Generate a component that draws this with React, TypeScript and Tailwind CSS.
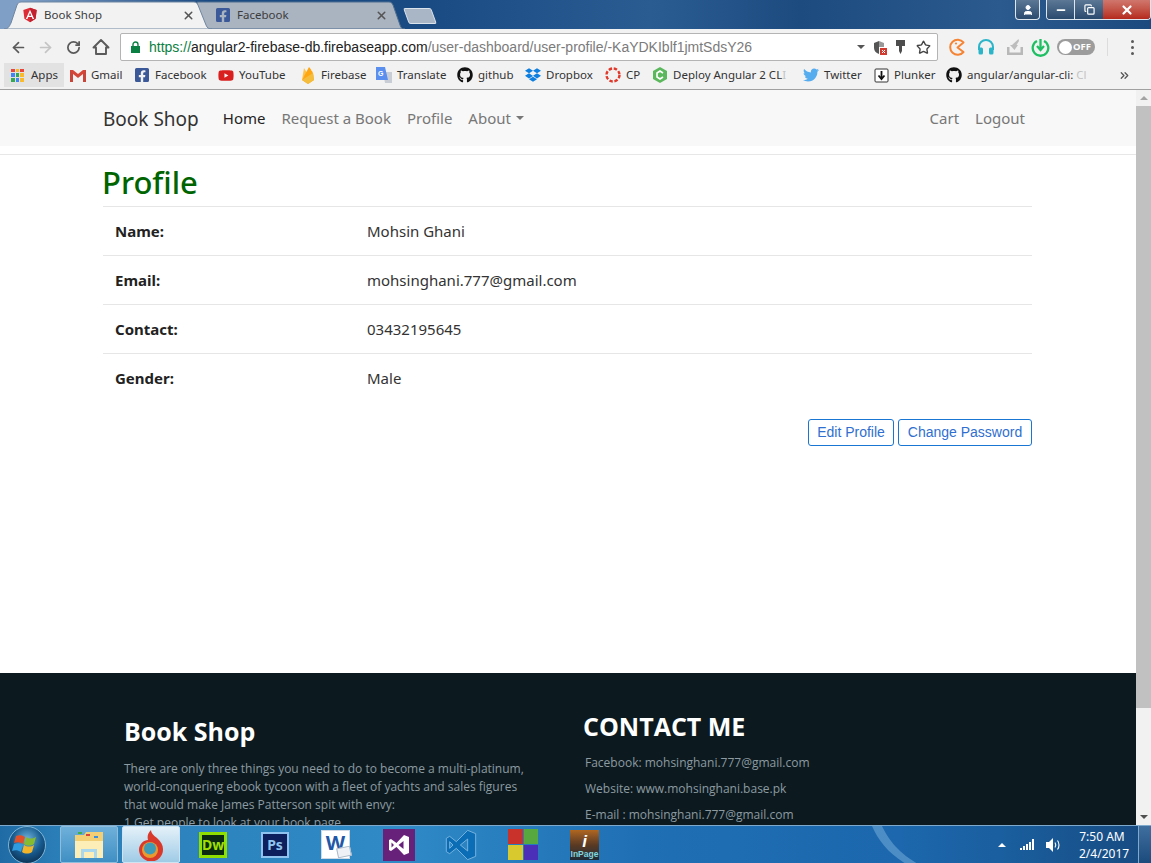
import React from 'react';
import { ArrowLeft, ArrowRight, RotateCw, Star, ChevronsRight, Minus, X, Copy, User } from 'lucide-react';
import { FaGithub, FaDropbox, FaTwitter, FaYoutube, FaFacebookSquare } from 'react-icons/fa';

const ui = "font-['Noto_Sans','Open_Sans',sans-serif]";

const Angular = ({ size = 16 }: { size?: number }) => (
  <svg width={size} height={size} viewBox="0 0 24 24">
    <path d="M12 1 2 4.6l1.6 13.2L12 23l8.4-5.2L22 4.6z" fill="#dd2c36" />
    <path d="M12 1v22l8.4-5.2L22 4.6z" fill="#c3202f" />
    <path d="M12 4 5.8 18h2.3l1.25-3.1h5.3L15.9 18h2.3zm1.8 9h-3.6L12 8.7z" fill="#fff" />
  </svg>
);

const Firebase = () => (
  <svg width="14" height="18" viewBox="0 0 14 18">
    <path d="M1 14 3 2l3 5z" fill="#ffc24a" />
    <path d="M1 14 8 1c1 1 4 6 4 6l1 7-6 4z" fill="#ffa712" />
    <path d="M1 14l11-7 1 7-6 4z" fill="#f4bd3e" />
  </svg>
);

const Tab = ({ title, active, icon }: { title: string; active?: boolean; icon: React.ReactNode }) => (
  <div className={active ? 'relative z-10 flex h-[28px] w-[212px] items-center pl-[22px] pr-[17px]' : 'relative -ml-[15px] flex h-[28px] w-[208px] items-center pl-[18px] pr-[17px]'}>
    {active ? (
      <svg className="absolute left-0 top-0" width="212" height="28" viewBox="0 0 212 28">
        <path d="M4 28C8 28 9 26 11 22L17 4C18 2 19 1 21 1H194C196 1 197 2 198 4L206 24C207 27 209 28 212 28Z" fill="#f2f2f2" stroke="#6f86a0" />
      </svg>
    ) : (
      <svg className="absolute left-0 top-0" width="208" height="28" viewBox="0 0 208 28">
        <path d="M0 28V1H192C194 1 195 2 196 4L203 24C204 27 205 28 208 28Z" fill="#aab4c1" stroke="#4f6f90" />
      </svg>
    )}
    <span className="relative mr-[6px] flex h-4 w-4 shrink-0 items-center justify-center">{icon}</span>
    <span className={`relative flex-1 truncate text-[11.5px] text-[#3c3c3c] ${ui}`}>{title}</span>
    <X className="relative h-[13px] w-[13px] text-[#555]" strokeWidth={2.8} />
  </div>
);

const bookmarks: { label: string; fadeTail?: string; w: string; icon: React.ReactNode }[] = [
  { label: 'Gmail', w: 'w-[64px]', icon: (
    <svg width="16" height="13" viewBox="0 0 16 13"><path d="M0 1h3l5 4 5-4h3v12h-3V5L8 9 3 5v8H0z" fill="#d44638" /><path d="M3 5v8H0V1zM13 5v8h3V1z" fill="#c9453a" /></svg>
  ) },
  { label: 'Facebook', w: 'w-[84px]', icon: <FaFacebookSquare size={16} color="#3b5998" /> },
  { label: 'YouTube', w: 'w-[82px]', icon: <FaYoutube size={17} color="#d9201f" /> },
  { label: 'Firebase', w: 'w-[76px]', icon: <Firebase /> },
  { label: 'Translate', w: 'w-[81px]', icon: (
    <svg width="16" height="16" viewBox="0 0 16 16"><path d="M7 5h9v11H9z" fill="#c9ced6" /><path d="M0 0h9l3 13H0z" fill="#5a8ff0" /><text x="2" y="9" fontSize="7" fill="#fff" fontFamily="Liberation Sans" fontWeight="700">G</text></svg>
  ) },
  { label: 'github', w: 'w-[68px]', icon: <FaGithub size={16} color="#111" /> },
  { label: 'Dropbox', w: 'w-[80px]', icon: <FaDropbox size={16} color="#0d7fe0" /> },
  { label: 'CP', w: 'w-[47px]', icon: (
    <svg width="16" height="16" viewBox="0 0 16 16"><circle cx="8" cy="8" r="6.5" fill="none" stroke="#e0392b" strokeWidth="2.4" strokeDasharray="3.4 1.7" /></svg>
  ) },
  { label: 'Deploy Angular 2 CL', fadeTail: 'I', w: 'w-[151px]', icon: (
    <svg width="16" height="16" viewBox="0 0 16 16"><path d="M8 0l7 4v8l-7 4-7-4V4z" fill="#5cb85c" /><path d="M11 6 8 4 5 6v4l3 2 3-2" fill="none" stroke="#fff" strokeWidth="1.6" /></svg>
  ) },
  { label: 'Twitter', w: 'w-[70px]', icon: <FaTwitter size={16} color="#55acee" /> },
  { label: 'Plunker', w: 'w-[73px]', icon: (
    <svg width="15" height="15" viewBox="0 0 15 15"><rect x="1" y="1" width="13" height="13" rx="1" fill="#fff" stroke="#333" /><path d="M7.5 3v7M4.5 7.5l3 3.5 3-3.5" fill="none" stroke="#111" strokeWidth="1.8" /></svg>
  ) },
];

const rows = [
  ['Name:', 'Mohsin Ghani'],
  ['Email:', 'mohsinghani.777@gmail.com'],
  ['Contact:', '03432195645'],
  ['Gender:', 'Male'],
];

const ChromeBar = () => (
  <div className={`shrink-0 ${ui}`}>
    {/* Title strip with tabs */}
    <div className="relative flex h-[29px] bg-[linear-gradient(90deg,#7f9fc6_0,#7f9fc6_20px,#1a4a82_210px,#1b4b83_430px,#2a5c92_650px,#1d4b80_800px,#2b5a8e_1000px,#1d4a7e_1151px)] pt-[1px]">
      <Tab title="Book Shop" active icon={<Angular size={16} />} />
      <Tab title="Facebook" icon={<FaFacebookSquare size={16} color="#3b5998" />} />
      <div className="ml-[1px] mt-[7px] h-[16px] w-[28px] skew-x-[20deg] rounded-[2px] border border-[#dbe3ec] bg-[#a9b6c6]" />
      <div className="absolute right-0 top-0 flex h-[20px]">
        <div className="mr-[6px] flex w-[25px] items-center justify-center rounded-b-[4px] border border-t-0 border-[#dfe6ee] bg-gradient-to-b from-[#5c7896] to-[#2a4a6e]">
          <User className="h-[12px] w-[12px] fill-white text-white" />
        </div>
        <div className="flex overflow-hidden rounded-b-[4px] border border-t-0 border-[#dfe6ee]">
          <div className="flex w-[28px] items-center justify-center border-r border-[#dfe6ee] bg-gradient-to-b from-[#5c7896] to-[#2a4a6e]"><Minus className="h-[12px] w-[12px] text-white" strokeWidth={3.5} /></div>
          <div className="flex w-[28px] items-center justify-center bg-gradient-to-b from-[#5c7896] to-[#2a4a6e]"><Copy className="h-[11px] w-[11px] text-white" strokeWidth={2.6} /></div>
          <div className="flex w-[47px] items-center justify-center bg-gradient-to-b from-[#d0766d] to-[#b5281c]"><X className="h-[14px] w-[14px] text-white" strokeWidth={3.8} /></div>
        </div>
      </div>
    </div>
    {/* Toolbar */}
    <div className="flex h-[33px] items-center bg-[#f2f2f2] pl-[10px] pt-[3px]">
      <ArrowLeft className="h-[17px] w-[17px] text-[#5a5a5a]" strokeWidth={2.4} />
      <ArrowRight className="ml-[10px] h-[17px] w-[17px] text-[#c4c4c4]" strokeWidth={2.4} />
      <RotateCw className="ml-[12px] h-[15px] w-[15px] text-[#5a5a5a]" strokeWidth={2.8} />
      <svg width="18" height="18" viewBox="0 0 18 18" className="ml-[11px]"><path d="M1.5 9.5 9 2l7.5 7.5H14V16H4V9.5z" fill="none" stroke="#5a5a5a" strokeWidth="1.9" strokeLinejoin="round" /></svg>
      <div className="ml-[10px] flex h-[28px] w-[818px] items-center rounded-[2px] border border-[#b4b4b4] bg-white pl-[10px] pr-[6px]">
        <svg width="9" height="12" viewBox="0 0 9 12"><path d="M2 5V3.5a2.5 2.5 0 0 1 5 0V5" fill="none" stroke="#0b8043" strokeWidth="1.4" /><rect y="5" width="9" height="7" fill="#0b8043" /></svg>
        <span className="ml-[9px] flex-1 truncate font-['Liberation_Sans',sans-serif] text-[14px] text-[#7b7b7b]">
          <span className="text-[#0b8043]">https://</span>
          <span className="text-[#222]">angular2-firebase-db.firebaseapp.com</span>
          /user-dashboard/user-profile/-KaYDKIblf1jmtSdsY26
        </span>
        <span className="mr-[8px] h-0 w-0 border-x-[4px] border-t-[4px] border-x-transparent border-t-[#555]" />
        <svg width="14" height="15" viewBox="0 0 14 15" className="mr-[8px]"><path d="M6 1 1 3v5c0 3 2 5 5 6z" fill="#555" /><path d="M6 1l5 2v4H6z" fill="#999" /><rect x="7" y="8" width="7" height="7" fill="#d23a30" /><path d="M9 10l3 3M12 10l-3 3" stroke="#fff" /></svg>
        <svg width="11" height="16" viewBox="0 0 11 16" className="mr-[10px]"><path d="M1 1h9v6H7v5l-1.5 3L4 12V7H1z" fill="#4d4d4d" /></svg>
        <Star className="h-[15px] w-[15px] text-[#444]" strokeWidth={2.2} />
      </div>
      <svg width="18" height="18" viewBox="0 0 18 18" className="ml-[10px]"><path d="M15.5 4.5a7.5 7.5 0 1 0 0 9.5L9.5 9.5z" fill="none" stroke="#f58434" strokeWidth="2" strokeLinejoin="round" /><circle cx="8" cy="5.5" r="1.1" fill="#f58434" /></svg>
      <svg width="18" height="18" viewBox="0 0 18 18" className="ml-[11px]"><path d="M2 12V9a7 7 0 0 1 14 0v3" fill="none" stroke="#2cb5c9" strokeWidth="2" /><rect x="1.5" y="9.5" width="4.5" height="7" rx="1.5" fill="#2cb5c9" /><rect x="12" y="9.5" width="4.5" height="7" rx="1.5" fill="#2cb5c9" /></svg>
      <svg width="18" height="18" viewBox="0 0 18 18" className="ml-[11px]"><path d="M1 9v8h16V9h-2.5v5.5h-11V9z" fill="#b8b8b8" /><path d="M12.5 1 6 7H4l4.5 5L12 7h-1.5l2.5-4z" fill="#bdbdbd" /></svg>
      <svg width="19" height="19" viewBox="0 0 19 19" className="ml-[7px]"><path d="M6 3a7.8 7.8 0 1 0 7 0" fill="none" stroke="#1fbf63" strokeWidth="2.3" /><path d="M9.5 1v10M6 8l3.5 4L13 8" fill="none" stroke="#1fbf63" strokeWidth="2.3" /></svg>
      <div className="ml-[7px] flex h-[16px] w-[38px] items-center rounded-full bg-[#9c9c9c] pl-[2px]">
        <span className="h-[13px] w-[13px] shrink-0 rounded-full bg-white" />
        <span className="ml-[1px] text-[9.5px] font-bold leading-none text-white">OFF</span>
      </div>
      <div className="ml-[12px] h-[18px] w-px bg-[#dcdcdc]" />
      <div className="ml-[23px] flex flex-col gap-[3px]">
        <span className="h-[3px] w-[3px] rounded-full bg-[#5a5a5a]" />
        <span className="h-[3px] w-[3px] rounded-full bg-[#5a5a5a]" />
        <span className="h-[3px] w-[3px] rounded-full bg-[#5a5a5a]" />
      </div>
    </div>
    {/* Bookmarks */}
    <div className="flex h-[28px] items-center border-b border-[#a0a0a0] bg-[#f2f2f2] pb-[1px] pl-[4px] text-[11.5px] text-[#333]">
      <div className="flex h-[24px] w-[60px] items-center gap-[7px] bg-[#e2e2e2] pl-[7px]">
        <div className="grid h-[13px] w-[13px] grid-cols-3 gap-[1px]">
          <span className="bg-[#e8453c]" /><span className="bg-[#f9bb2d]" /><span className="bg-[#e8453c]" />
          <span className="bg-[#4285f4]" /><span className="bg-[#34a853]" /><span className="bg-[#f9bb2d]" />
          <span className="bg-[#34a853]" /><span className="bg-[#4285f4]" /><span className="bg-[#f9bb2d]" />
        </div>
        <span>Apps</span>
      </div>
      <div className="w-[6px]" />
      {bookmarks.map((b) => (
        <div key={b.label} className={`flex shrink-0 items-center gap-[5px] whitespace-nowrap ${b.w}`}>
          <span className="flex h-4 w-4 shrink-0 items-center justify-center">{b.icon}</span>
          <span>{b.label}{b.fadeTail && <span className="text-[#c4c4c4]">{b.fadeTail}</span>}</span>
        </div>
      ))}
      <div className="flex w-[172px] shrink-0 items-center gap-[5px] whitespace-nowrap">
        <FaGithub size={16} color="#111" className="shrink-0" />
        <span>angular/angular-cli: <span className="text-[#c4c4c4]">Cl</span></span>
      </div>
      <ChevronsRight className="h-[13px] w-[13px] text-[#555]" strokeWidth={2.4} />
    </div>
  </div>
);

const Page = () => (
  <div className="flex min-h-0 flex-1">
    <div className={`flex-1 overflow-hidden bg-white text-[#333] ${ui}`}>
      {/* Navbar */}
      <nav className="flex h-[56px] items-center bg-[#f8f8f8] pl-[103px] pr-[111px] text-[15px] text-[#777]">
        <span className="pt-[2px] text-[19px] text-[#333]">Book Shop</span>
        <span className="ml-[24px] text-[#222]">Home</span>
        <span className="ml-[16px]">Request a Book</span>
        <span className="ml-[16px]">Profile</span>
        <span className="ml-[16px] flex items-center">About<span className="ml-[5px] h-0 w-0 border-x-[4px] border-t-[4px] border-x-transparent border-t-[#777]" /></span>
        <span className="ml-auto">Cart</span>
        <span className="ml-[16px]">Logout</span>
      </nav>
      <div className="mt-[8px] border-t border-[#e7e7e7] pl-[103px] pr-[104px]">
        <h1 className="-ml-px h-[51px] pt-[2px] text-[31px] font-medium leading-[50px] text-[#006400]">Profile</h1>
        {rows.map(([k, v]) => (
          <div key={k} className="flex h-[49px] items-center border-t border-[#e6e6e6] pl-[12px] text-[15px]">
            <span className="w-[252px] font-bold text-[#222]">{k}</span>
            <span>{v}</span>
          </div>
        ))}
        <div className="mt-[17px] flex justify-end gap-[4px] font-['Liberation_Sans',sans-serif] text-[14px] text-[#2f6fd0]">
          <button className="h-[27px] w-[86px] rounded-[3px] border border-[#1976d2]">Edit Profile</button>
          <button className="h-[27px] w-[134px] rounded-[3px] border border-[#1976d2]">Change Password</button>
        </div>
      </div>
      {/* Footer */}
      <footer className="mt-[227px] flex h-[300px] bg-[#0c1a20] pl-[124px] font-['Open_Sans',sans-serif] text-[12px] text-[#8d9ba1]">
        <div className="w-[459px] pt-[40px]">
          <h2 className="text-[25px] font-bold leading-[36px] text-white">Book Shop</h2>
          <p className="mt-[11px] w-[410px] leading-[18px]">
            There are only three things you need to do to become a multi-platinum, world-conquering ebook tycoon with a fleet of yachts and sales figures that would make James Patterson spit with envy:
            <br />
            1 Get people to look at your book page
          </p>
        </div>
        <div className="pt-[35px]">
          <h2 className="text-[25px] font-bold leading-[36px] text-white">CONTACT ME</h2>
          <div className="ml-[2px] mt-[10px] flex flex-col gap-[8px] leading-[18px]">
            <span>Facebook: mohsinghani.777@gmail.com</span>
            <span>Website: www.mohsinghani.base.pk</span>
            <span>E-mail : mohsinghani.777@gmail.com</span>
          </div>
        </div>
      </footer>
    </div>
    {/* Scrollbar */}
    <div className="flex w-[15px] shrink-0 flex-col items-center bg-[#f1f1f1]">
      <div className="flex h-[16px] items-center"><span className="h-0 w-0 border-x-[4px] border-b-[4px] border-x-transparent border-b-[#a3a3a3]" /></div>
      <div className="h-[602px] w-full bg-[#c1c1c1]" />
      <div className="flex-1" />
      <div className="flex h-[16px] items-center"><span className="h-0 w-0 border-x-[4px] border-t-[4px] border-x-transparent border-t-[#505050]" /></div>
    </div>
  </div>
);

const Taskbar = () => (
  <div className="relative flex h-[38px] shrink-0 items-center overflow-hidden border-t border-[#7fa9cc] bg-[linear-gradient(90deg,#1f6ba5_0,#2b7fb8_60px,#2f8ac6_400px,#1f6fb4_640px,#1c67ad_900px,#1a5f9f_1000px,#174a80_1151px)] font-['Noto_Sans',sans-serif]">
    {/* light streak of the desktop wallpaper */}
    <svg className="absolute left-[860px] top-0" width="70" height="38" viewBox="0 0 70 38">
      <path d="M12 0h10c6 12 14 25 36 38H46C28 27 18 14 12 0z" fill="#7db4de" opacity="0.5" />
    </svg>
    <svg width="40" height="38" viewBox="0 0 40 38" className="relative ml-[7px] shrink-0">
      <defs>
        <radialGradient id="orb" cx="50%" cy="35%" r="65%">
          <stop offset="0" stopColor="#6fb5dd" />
          <stop offset="0.6" stopColor="#175a8e" />
          <stop offset="1" stopColor="#0c3356" />
        </radialGradient>
      </defs>
      <circle cx="20" cy="19" r="18.5" fill="url(#orb)" stroke="#7fb6d6" />
      <path d="M9 10c3-1 6-1 9 1l-2 7c-3-2-6-2-9-1z" fill="#e2502a" />
      <path d="M19 11c3 2 6 2 10 0l-2 7c-3 2-7 2-10 0z" fill="#86bb2f" />
      <path d="M7 18c3-1 6-1 9 1l-2 7c-3-2-6-2-9-1z" fill="#2f9be0" />
      <path d="M17 19c3 2 7 2 10 0l-2 7c-3 2-7 2-10 0z" fill="#f2b52a" />
    </svg>
    <div className="relative ml-[13px] flex h-[37px] w-[58px] items-center justify-center rounded-[2px] border border-[#8fbddc] bg-gradient-to-b from-[#6eb0da] to-[#3f8fc4]">
      <svg width="32" height="30" viewBox="0 0 32 30">
        <path d="M2 5h9l2-3h17v25H2z" fill="#f2cf74" />
        <rect x="5" y="2" width="4" height="2" fill="#3fae49" />
        <rect x="13" y="4" width="4" height="2" fill="#d9453a" />
        <rect x="21" y="6" width="4" height="2" fill="#3b8fdd" />
        <path d="M2 11h28v17H2z" fill="#fdeeb8" />
        <path d="M8 19h16v9h-3v-6H11v6H8z" fill="#a9d8ee" />
      </svg>
    </div>
    <div className="relative ml-[4px] flex h-[37px] w-[58px] items-center justify-center rounded-[2px] border border-[#cfe4f2] bg-gradient-to-b from-[#e4f1f9] to-[#9fcbe6]">
      <svg width="26" height="32" viewBox="0 0 26 32">
        <path d="M13 1c0 3 2 5 6 8 4 4 6 7 6 11a12 12 0 0 1-24 1c0-6 5-10 9-10-1-4 0-7 3-10z" fill="#d8392b" />
        <circle cx="12" cy="21" r="8" fill="#e99a2e" />
        <circle cx="12" cy="19.5" r="6" fill="#3d9bb8" />
      </svg>
    </div>
    <div className="relative ml-[19px] flex h-[26px] w-[28px] items-center justify-center border-[3px] border-[#8fe000] bg-[#0b2a10] text-[14px] font-bold leading-none text-[#9fe000]">Dw</div>
    <div className="relative ml-[34px] flex h-[26px] w-[28px] items-center justify-center border-[2px] border-[#8fc2ee] bg-[#0d1f5c] text-[14px] font-bold leading-none text-[#8fc2ee]">Ps</div>
    <div className="relative ml-[32px] flex h-[29px] w-[29px] items-center justify-center border border-[#cfd9e6] bg-white pb-[4px] text-[20px] font-bold leading-none text-[#2257a8]">
      W
      <span className="absolute bottom-[1px] right-[-2px] h-[10px] w-[14px] -rotate-12 border border-[#aab8c8] bg-[#eef2f7]" />
    </div>
    <div className="relative ml-[33px] flex h-[32px] w-[32px] items-center justify-center bg-[#68217a]">
      <svg width="24" height="24" viewBox="0 0 24 24"><path d="M17 2 9.5 10 4 6 2 7v10l2 1 5.500-4 7.500 8 5-2V4zM16.500 8v8L11.500 12zM4.500 9.500 7 12l-2.500 2.500z" fill="#fff" fillRule="evenodd" /></svg>
    </div>
    <svg width="32" height="32" viewBox="0 0 24 24" className="relative ml-[30px]"><path d="M17 1 8.500 9.500 3.500 5.500 1 7v10l2.500 1.500 5-4 8.500 8.500 6-2.500V3.500zM17 7.500v9L11.500 12zM3.500 9.500 6 12l-2.500 2.500z" fill="#0a6db5" stroke="#8cc0e6" strokeWidth="0.6" fillRule="evenodd" /></svg>
    <div className="relative ml-[31px] grid h-[31px] w-[30px] grid-cols-2 gap-[1px]">
      <span className="bg-[#c8322b]" /><span className="bg-[#57a83e]" /><span className="bg-[#d8c92f]" /><span className="bg-[#4b2fb8]" />
    </div>
    <div className="relative ml-[32px] flex h-[30px] w-[29px] flex-col items-center justify-end bg-gradient-to-b from-[#b0661f] via-[#5a3a22] to-[#1d2a36] font-['Liberation_Sans',sans-serif] leading-none">
      <span className="text-[17px] font-bold italic text-white">i</span>
      <span className="pb-[1px] text-[8.500px] font-bold text-[#7fd8e0]">InPage</span>
    </div>
    <div className="relative ml-auto flex h-full items-center">
      <span className="h-0 w-0 border-x-[4px] border-b-[4px] border-x-transparent border-b-white" />
      <svg width="15" height="11" viewBox="0 0 15 11" className="ml-[14px]"><path d="M0 9h2v2H0zM3 7h2v4H3zM6 5h2v6H6zM9 3h2v8H9zM12 0h2v11h-2z" fill="#fff" /></svg>
      <svg width="16" height="16" viewBox="0 0 16 16" className="ml-[10px]"><path d="M1 5h3l4-4v14l-4-4H1z" fill="#fff" /><path d="M10 5.500c1 1.500 1 3.500 0 5M12.500 3.500c2 2.500 2 6.500 0 9" fill="none" stroke="#fff" strokeWidth="1.1" /></svg>
      <div className="ml-[18px] w-[46px] text-center text-[12px] leading-[17px] text-white">
        <div className="whitespace-nowrap">7:50 AM</div>
        <div>2/4/2017</div>
      </div>
      <div className="ml-[13px] h-full w-[13px] border-l border-[#7fa9cc] bg-gradient-to-b from-[#3f6f9f] to-[#1b4a7c]" />
    </div>
  </div>
);

export default function App() {
  return (
    <div className="flex h-[863px] w-[1151px] flex-col overflow-hidden">
      <ChromeBar />
      <Page />
      <Taskbar />
    </div>
  );
}
